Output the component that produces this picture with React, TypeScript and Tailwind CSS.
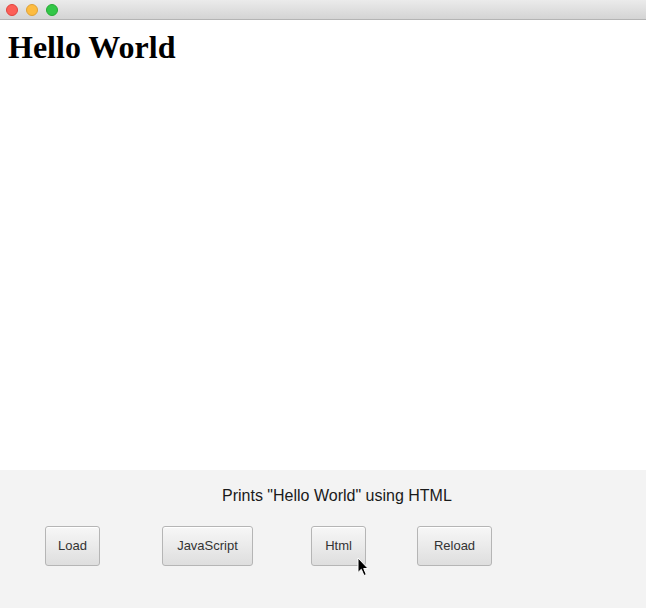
import React from 'react';

const btn =
  'h-[40px] rounded-[3px] border border-[#b5b5b5] bg-gradient-to-b from-[#f7f7f7] to-[#dedede] text-[13px] text-[#333] shadow-[inset_0_1px_0_#ffffff] flex items-center justify-center';

export default function App() {
  return (
    <div className="w-[646px] h-[608px] flex flex-col bg-white overflow-hidden" style={{ fontFamily: '"Liberation Sans", Arial, sans-serif' }}>
      {/* Title bar */}
      <div className="h-[20px] shrink-0 bg-gradient-to-b from-[#ebebeb] to-[#d4d4d4] border-b border-[#b4b4b4] flex items-center gap-[8px] pl-[6px]">
        <span className="w-[12px] h-[12px] rounded-full bg-[#fc5f57] border border-[#e0443e]" />
        <span className="w-[12px] h-[12px] rounded-full bg-[#fdbc40] border border-[#dea236]" />
        <span className="w-[12px] h-[12px] rounded-full bg-[#33c748] border border-[#27aa35]" />
      </div>

      {/* Web view */}
      <div className="h-[450px] shrink-0 bg-white">
        <h1 className="m-0 pl-[8px] pt-[9px] text-[32px] font-bold leading-[37px] text-black" style={{ fontFamily: '"Liberation Serif", "Times New Roman", serif' }}>
          Hello World
        </h1>
      </div>

      {/* Controls */}
      <div className="flex-1 bg-[#f3f3f3] relative">
        <div className="pt-[17px] pl-[222px] text-[16px] leading-[18px] text-[#1a1a1a]">
          Prints "Hello World" using HTML
        </div>
        <div className="flex mt-[21px] pl-[45px]">
          <button className={`${btn} w-[55px]`}>Load</button>
          <button className={`${btn} w-[91px] ml-[62px]`}>JavaScript</button>
          <button className={`${btn} w-[55px] ml-[58px]`}>Html</button>
          <button className={`${btn} w-[75px] ml-[51px]`}>Reload</button>
        </div>
        {/* mouse pointer */}
        <svg className="absolute left-[357px] top-[87px]" width="13" height="20" viewBox="0 0 13 20">
          <path d="M1 1 L1 15.5 L4.3 12.3 L7 18.5 L9.3 17.5 L6.7 11.5 L11 11.5 Z" fill="#000" stroke="#fff" strokeWidth="1" strokeLinejoin="round" />
        </svg>
      </div>
    </div>
  );
}
